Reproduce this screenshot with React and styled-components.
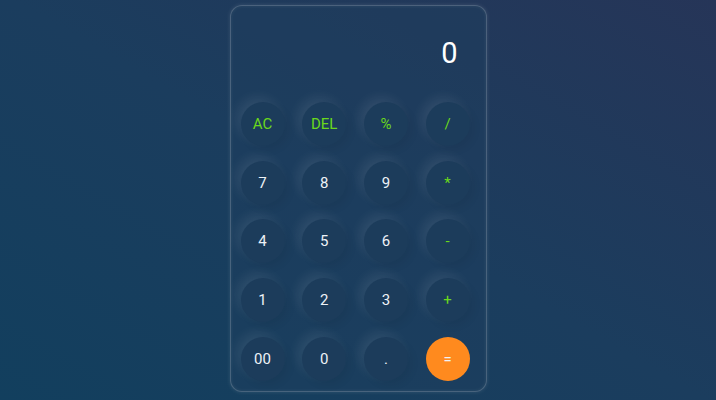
import React, { useState } from "react";
import styled, { createGlobalStyle } from "styled-components";

const Global = createGlobalStyle`
  html, body { margin: 0; padding: 0; }
  body {
    font-family: Roboto, "Noto Sans", sans-serif;
    background: linear-gradient(30deg, #123f5e 0%, #1b3d5e 50%, #263558 100%);
    min-height: 100vh;
  }
`;

const Page = styled.div`
  height: 400px;
  box-sizing: border-box;
  padding-top: 5px;
  display: flex;
  align-items: flex-start;
  justify-content: center;
`;

const Calculator = styled.div`
  width: 257px;
  height: 387px;
  box-sizing: border-box;
  border: 1px solid rgba(255, 255, 255, 0.2);
  border-radius: 12px;
  background: rgba(30, 62, 94, 0.5);
  box-shadow: 0 0 4px rgba(255, 255, 255, 0.12), inset 0 0 4px rgba(255, 255, 255, 0.08);
  display: flex;
  flex-direction: column;
  padding: 0 15px 10px 10px;
`;

const Display = styled.div`
  height: 96px;
  display: flex;
  align-items: center;
  justify-content: flex-end;
  padding-right: 13px;
  padding-bottom: 2px;
  color: #ffffff;
  font-size: 29px;
  box-sizing: border-box;
`;

const Keys = styled.div`
  display: grid;
  grid-template-columns: repeat(4, 44px);
  grid-auto-rows: 44px;
  column-gap: 17.7px;
  row-gap: 14.7px;
`;

const Key = styled.button`
  width: 44px;
  height: 44px;
  border-radius: 50%;
  border: none;
  padding: 0;
  font-family: Roboto, "Noto Sans", sans-serif;
  font-size: 15px;
  font-weight: 400;
  color: ${(p) => (p.$variant === "op" ? "#6ad81c" : "#eef2f7")};
  background: ${(p) => (p.$variant === "eq" ? "#ff8a1e" : "#1c3c5b")};
  box-shadow: ${(p) =>
    p.$variant === "eq"
      ? "none"
      : "-5px -5px 12px rgba(255,255,255,0.08), 4px 4px 8px rgba(0,0,0,0.06)"};
  cursor: pointer;
  display: flex;
  align-items: center;
  justify-content: center;
`;

const keys = [
  ["AC", "op"], ["DEL", "op"], ["%", "op"], ["/", "op"],
  ["7"], ["8"], ["9"], ["*", "op"],
  ["4"], ["5"], ["6"], ["-", "op"],
  ["1"], ["2"], ["3"], ["+", "op"],
  ["00"], ["0"], ["."], ["=", "eq"],
];

export default function App() {
  const [value] = useState("0");
  return (
    <>
      <Global />
      <Page>
        <Calculator>
          <Display>{value}</Display>
          <Keys>
            {keys.map(([k, v]) => (
              <Key key={k} $variant={v}>{k}</Key>
            ))}
          </Keys>
        </Calculator>
      </Page>
    </>
  );
}
